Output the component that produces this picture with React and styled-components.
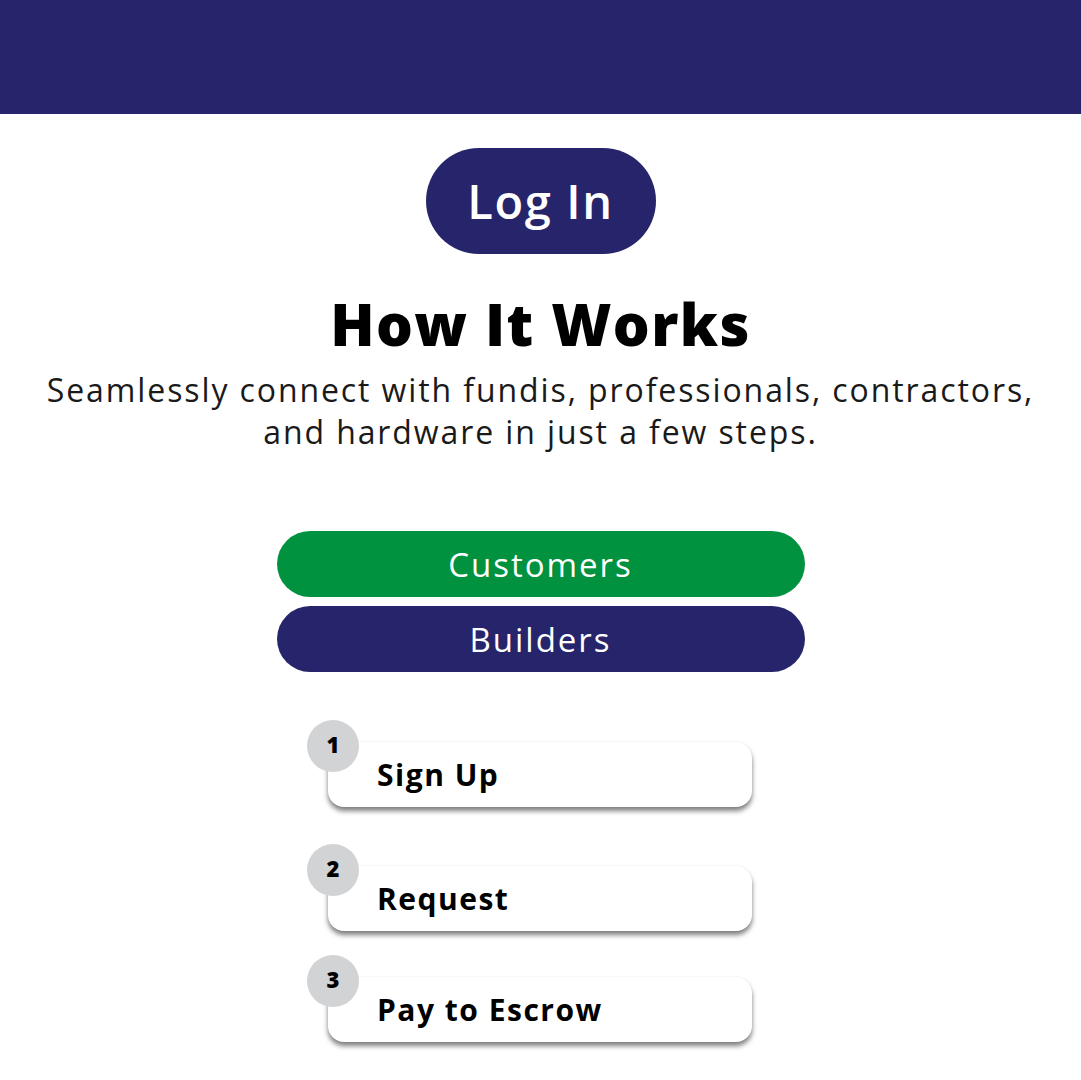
import React from 'react';
import styled, { createGlobalStyle } from 'styled-components';

const GlobalStyle = createGlobalStyle`
  body {
    margin: 0;
    background: #ffffff;
    font-family: 'Open Sans', 'Noto Sans', sans-serif;
  }
`;

const steps = [
  { num: 1, label: 'Sign Up', top: 0 },
  { num: 2, label: 'Request', top: 37 },
  { num: 3, label: 'Pay to Escrow', top: 24 },
];

const App = () => {
  return (
    <Page>
      <GlobalStyle />
      <TopBar />
      <Main>
        <LoginButton>Log In</LoginButton>
        <Title>How It Works</Title>
        <Subtitle>
          Seamlessly connect with fundis, professionals, contractors,
          <br />
          and hardware in just a few steps.
        </Subtitle>
        <TabGroup>
          <TabButton $bg="#00923f">Customers</TabButton>
          <TabButton $bg="#26246a">Builders</TabButton>
        </TabGroup>
        <StepList>
          {steps.map(step => (
            <Step key={step.num} $top={step.top}>
              <StepNumber>{step.num}</StepNumber>
              <StepCard>{step.label}</StepCard>
            </Step>
          ))}
        </StepList>
      </Main>
    </Page>
  );
};

export default App;

const Page = styled.div`
  width: 1081px;
  min-height: 1080px;
`;

const TopBar = styled.div`
  height: 114px;
  background: #26246a;
`;

const Main = styled.div`
  display: flex;
  flex-direction: column;
  align-items: center;
`;

const LoginButton = styled.button`
  margin-top: 34px;
  width: 230px;
  height: 106px;
  border: none;
  border-radius: 53px;
  background: #26246a;
  color: #ffffff;
  font-family: inherit;
  font-size: 47px;
  font-weight: 600;
  letter-spacing: 1.6px;
  cursor: pointer;
`;

const Title = styled.h1`
  margin: 32px 0 0;
  font-size: 58px;
  font-weight: 800;
  line-height: 76px;
  letter-spacing: 1.4px;
  color: #000000;
`;

const Subtitle = styled.p`
  margin: 7px 0 0;
  font-size: 32px;
  line-height: 42px;
  letter-spacing: 1.9px;
  text-align: center;
  color: #1a1a1a;
`;

const TabGroup = styled.div`
  margin-top: 78px;
  display: flex;
  flex-direction: column;
  gap: 9px;
`;

const TabButton = styled.button`
  width: 528px;
  height: 66px;
  border: none;
  border-radius: 33px;
  background: ${p => p.$bg};
  color: #ffffff;
  font-family: inherit;
  font-size: 33px;
  letter-spacing: 2px;
  cursor: pointer;
`;

const StepList = styled.div`
  margin: 48px 22px 0 0;
  display: flex;
  flex-direction: column;
  padding-bottom: 40px;
`;

const Step = styled.div`
  position: relative;
  margin-top: ${p => p.$top}px;
  padding: 22px 0 0 21px;
`;

const StepNumber = styled.div`
  position: absolute;
  z-index: 1;
  left: 0;
  top: 0;
  width: 52px;
  height: 52px;
  border-radius: 50%;
  background: #d1d3d4;
  display: flex;
  align-items: center;
  justify-content: center;
  font-size: 22px;
  font-weight: 800;
  padding-bottom: 4px;
  box-sizing: border-box;
`;

const StepCard = styled.div`
  width: 424px;
  height: 65px;
  box-sizing: border-box;
  padding: 0 0 0 49px;
  display: flex;
  align-items: center;
  border-radius: 16px;
  background: #ffffff;
  box-shadow: 0 4px 5px rgba(0, 0, 0, 0.5), 0 0 2px rgba(0, 0, 0, 0.06);
  font-size: 30px;
  font-weight: 700;
  letter-spacing: 1.5px;
  color: #000000;
`;
